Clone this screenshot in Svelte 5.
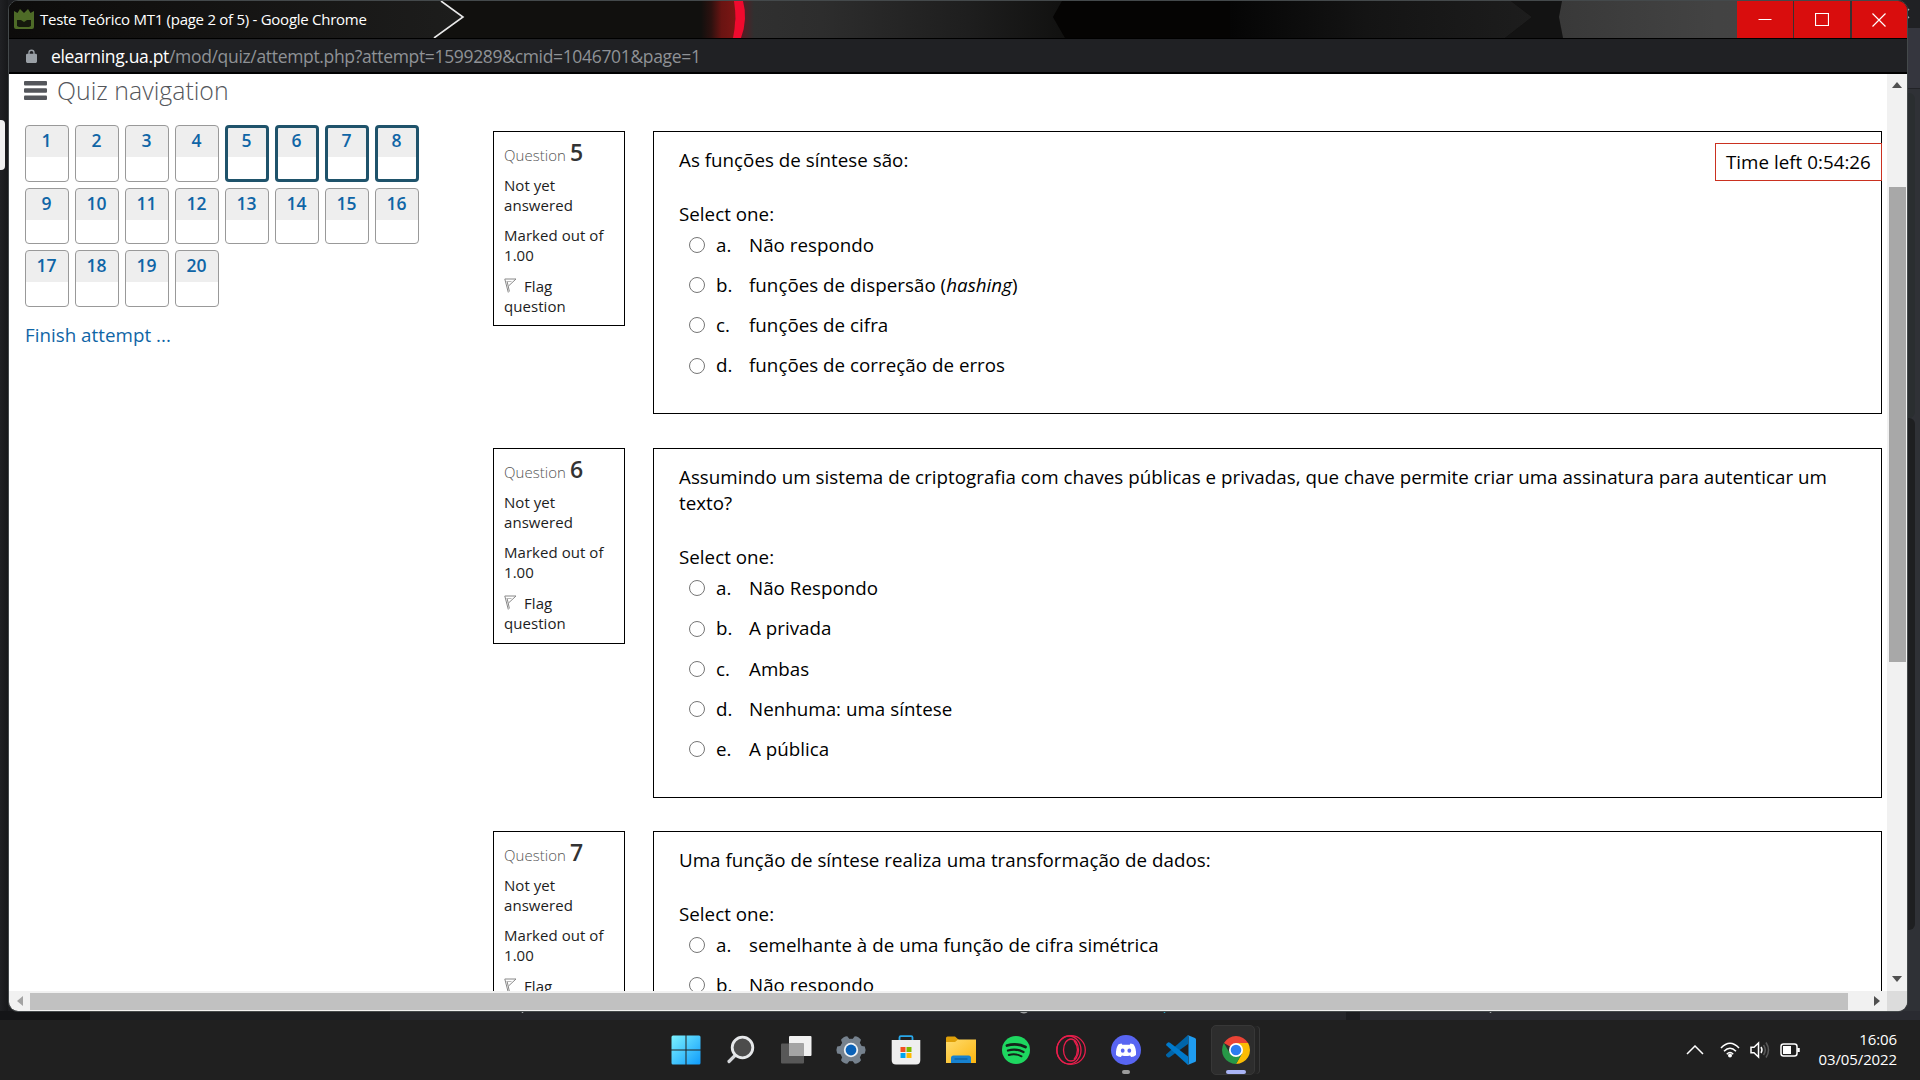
<script>
  const pages = Array.from({ length: 20 }, (_, i) => i + 1);
  const isCurrent = (n) => n >= 5 && n <= 8;

  const questions = [
    {
      number: 5,
      text: 'As funções de síntese são:',
      size: 'short',
      options: [
        { text: 'Não respondo' },
        { text: 'funções de dispersão (', em: 'hashing', after: ')' },
        { text: 'funções de cifra' },
        { text: 'funções de correção de erros' }
      ]
    },
    {
      number: 6,
      text: 'Assumindo um sistema de criptografia com chaves públicas e privadas, que chave permite criar uma assinatura para autenticar um texto?',
      size: 'tall',
      options: [
        { text: 'Não Respondo' },
        { text: 'A privada' },
        { text: 'Ambas' },
        { text: 'Nenhuma: uma síntese' },
        { text: 'A pública' }
      ]
    },
    {
      number: 7,
      text: 'Uma função de síntese realiza uma transformação de dados:',
      size: 'short',
      options: [
        { text: 'semelhante à de uma função de cifra simétrica' },
        { text: 'Não respondo' }
      ]
    }
  ];
</script>

<div class="desktop">
  <div class="behind-left"></div>
  <div class="edge-tab"></div>
  <div class="behind-right"><i class="r1"></i><i class="r2"></i><i class="r3"></i><i class="r4"></i></div>
  <div class="behind-bottom"><i class="b1"></i><i class="b2"></i><i class="b3"></i><i class="b4"></i><i class="b5"></i></div>
  <svg class="specks" width="1920" height="1080" viewBox="0 0 1920 1080"><g fill="none" stroke="#a0a2a4" stroke-width="1.500"><path d="M522.500 1011V1013M1490.500 1011V1013M1019.500 1011Q1024 1014.500 1028 1011" /><path d="M1164.500 1011V1013" stroke="#2b9bb5" /><path d="M1906 12L1909 9M1906 15L1909 18" /></g></svg>

  <div class="window">
    <header class="titlebar">
      <svg class="theme" width="1898" height="37" viewBox="9 1 1898 37" preserveAspectRatio="none">
        <defs>
          <linearGradient id="tabg" x1="0" x2="1"><stop offset="0" stop-color="#0d0c0b" /><stop offset=".25" stop-color="#11100f" /><stop offset="1" stop-color="#1d1d1c" /></linearGradient>
          <linearGradient id="redg" x1="0" x2="1"><stop offset="0" stop-color="#11100e" /><stop offset=".3" stop-color="#2c110f" /><stop offset=".6" stop-color="#691412" /><stop offset="1" stop-color="#7b1614" /></linearGradient>
          <linearGradient id="greyg" x1="0" x2="1"><stop offset="0" stop-color="#5a1a22" /><stop offset=".04" stop-color="#303030" /><stop offset=".25" stop-color="#2d2d2d" /><stop offset=".7" stop-color="#1e1e1e" /><stop offset="1" stop-color="#111110" /></linearGradient>
          <linearGradient id="darkg" x1="0" x2="1"><stop offset="0" stop-color="#050505" /><stop offset=".45" stop-color="#141414" /><stop offset="1" stop-color="#1d1d1d" /></linearGradient>
          <linearGradient id="lightg" x1="0" x2="1"><stop offset="0" stop-color="#393939" /><stop offset=".45" stop-color="#434343" /><stop offset="1" stop-color="#444" /></linearGradient>
        </defs>
        <rect x="9" y="1" width="1898" height="37" fill="#11100e" />
        <path d="M9 1H441L463 17L434 38H9Z" fill="url(#tabg)" />
        <path d="M441 1L463 17L434 38" fill="none" stroke="#e8e8e8" stroke-width="1.6" />
        <rect x="701" y="1" width="34" height="37" fill="url(#redg)" />
        <path d="M743 1H1062L1053 17L1065 38H741Z" fill="url(#greyg)" />
        <path d="M734 1H743Q748 19 741 38H733Q737 19 734 1Z" fill="#f00a2e" />
        <path d="M1062 1H1300V38H1065L1053 17Z" fill="#050403" />
        <path d="M1230 1H1511L1532 17L1505 38H1230Z" fill="url(#darkg)" />
        <path d="M1511 1H1562L1559 17L1563 38H1505L1532 17Z" fill="#131313" />
        <path d="M1562 1H1907V38H1563L1559 17Z" fill="url(#lightg)" />
      </svg>
      <svg class="favicon" width="20" height="20" viewBox="0 0 20 20"><path d="M0 2L3.500 4L6 0L10 4L14 0L16.500 4L20 2V18Q20 20 18 20H2Q0 20 0 18Z" fill="#4e6b27" /><path d="M3 11H7L10 13L13 11H17V17L15 18H5L3 17Z" fill="#15190d" /></svg>
      <span class="title">Teste Teórico MT1 (page 2 of 5) - Google Chrome</span>
      <div class="controls">
        <div><svg width="14" height="14" viewBox="0 0 14 14"><path d="M.5 6.500H13.500" /></svg></div>
        <div><svg width="14" height="14" viewBox="0 0 14 14"><path d="M.5.5H13.500V12.500H.5Z" /></svg></div>
        <div><svg width="14" height="14" viewBox="0 0 14 14"><path d="M.5.5L13.500 13.500M13.500.5L.5 13.500" /></svg></div>
      </div>
    </header>

    <div class="address">
      <svg width="11" height="14" viewBox="0 0 12 15"><path d="M1.500 5H2.500V4A3.500 3.500 0 0 1 9.500 4V5H10.500Q12 5 12 6.500V13.500Q12 15 10.500 15H1.500Q0 15 0 13.500V6.500Q0 5 1.500 5ZM4 5H8V4A2 2 0 0 0 4 4Z" fill="#9aa0a6" fill-rule="evenodd" /></svg>
      <span class="url"><b>elearning.ua.pt</b>/mod/quiz/attempt.php?attempt=1599289&amp;cmid=1046701&amp;page=1</span>
    </div>

    <div class="viewport">
      <main class="page">
        <aside class="nav">
          <h2><svg width="23" height="19" viewBox="0 0 23 19"><rect width="23" height="4.500" rx="1" /><rect y="7.200" width="23" height="4.500" rx="1" /><rect y="14.400" width="23" height="4.500" rx="1" /></svg><span>Quiz navigation</span></h2>
          <div class="grid">
            {#each pages as n}
              <a class:current={isCurrent(n)}><span>{n}</span></a>
            {/each}
          </div>
          <a class="finish">Finish attempt ...</a>
        </aside>

        <section class="questions">
          {#each questions as q}
            <article class={q.size}>
              <div class="info">
                <h3>Question <b>{q.number}</b></h3>
                <p>Not yet<br />answered</p>
                <p>Marked out of<br />1.00</p>
                <p class="flag"><svg width="13" height="15" viewBox="0 0 13 15"><path d="M.8 1L4.300 14.500M3 3L5.400 13.500M.8 1H12L4.500 8" /><path d="M4 3.500H7.500" stroke-width=".6" /></svg>Flag<br />question</p>
              </div>
              <div class="content">
                <p class="qtext">{q.text}</p>
                <p class="prompt">Select one:</p>
                {#each q.options as o, i}
                  <label><i class="radio"></i><span class="letter">{'abcde'[i]}.</span><span>{o.text}{#if o.em}<em>{o.em}</em>{o.after}{/if}</span></label>
                {/each}
              </div>
            </article>
          {/each}
        </section>
        <div class="timer">Time left 0:54:26</div>
      </main>
      <div class="vbar">
        <svg width="10" height="6" viewBox="0 0 10 6"><path d="M0 6L5 0L10 6Z" fill="#505050" /></svg>
        <i></i>
        <svg class="down" width="10" height="6" viewBox="0 0 10 6"><path d="M0 0L5 6L10 0Z" fill="#505050" /></svg>
      </div>
    </div>
    <div class="hbar">
      <svg width="6" height="10" viewBox="0 0 6 10"><path d="M6 0L0 5L6 10Z" fill="#a3a3a3" /></svg>
      <i></i>
      <svg class="right" width="6" height="10" viewBox="0 0 6 10"><path d="M0 0L6 5L0 10Z" fill="#505050" /></svg>
      <b></b>
    </div>
  </div>

  <footer class="taskbar">
    <div class="apps">
      <div class="app">
        <svg width="30" height="30" viewBox="0 0 30 30"><defs><linearGradient id="win" x1="0" y1="0" x2="1" y2="1"><stop offset="0" stop-color="#7cf2ff" /><stop offset="1" stop-color="#0f9bfb" /></linearGradient></defs><path d="M.5 2Q.5.500 2 .5H14.500V14.500H.5ZM15.500.5H28Q29.500.500 29.500 2V14.500H15.500ZM.5 15.500H14.500V29.500H2Q.5 29.500.5 28ZM15.500 15.500H29.500V28Q29.500 29.500 28 29.500H15.500Z" fill="url(#win)" /></svg>
      </div>
      <div class="app">
        <svg width="30" height="30" viewBox="0 0 30 30"><path d="M9.500 20L3 26.500" stroke="#d4d6d9" stroke-width="3.200" stroke-linecap="round" /><circle cx="16.500" cy="12.500" r="10.300" fill="#4c4c4c" stroke="#e6e8ea" stroke-width="2.800" /></svg>
      </div>
      <div class="app">
        <svg width="32" height="30" viewBox="0 0 32 30"><rect x="9" y="1" width="22.500" height="20" rx="1" fill="#f1f1f1" /><rect x="1" y="8.500" width="23" height="20" rx="1" fill="#585858" /><path d="M9 8.500H24V21H9Z" fill="#a5a5a5" /></svg>
      </div>
      <div class="app">
        <svg width="32" height="30" viewBox="-16 -15 32 30"><g fill="#76828e"><circle r="11.300" />{#each [30, 90, 150, 210, 270, 330] as a}<path d="M-4.500 -8L-3.600 -13.800Q0 -15.500 3.600 -13.800L4.500 -8Z" transform="rotate({a})" />{/each}</g><circle r="7.200" fill="#eef2f5" /><circle r="5.400" fill="#0a62b8" /></svg>
      </div>
      <div class="app">
        <svg width="30" height="30" viewBox="0 0 30 30"><path d="M8.500 6V2.500Q8.500 1.200 9.800 1.200H20.200Q21.500 1.200 21.500 2.500V6" fill="none" stroke="#29a8ea" stroke-width="1.800" /><path d="M.7 5H29.300V25Q29.300 29.500 25 29.500H5Q.7 29.500.7 25Z" fill="#efefef" /><path d="M9.500 12H14.500V17H9.500Z" fill="#f25022" /><path d="M15.500 12H20.500V17H15.500Z" fill="#7fba00" /><path d="M9.500 18H14.500V23H9.500Z" fill="#00a4ef" /><path d="M15.500 18H20.500V23H15.500Z" fill="#ffb900" /></svg>
      </div>
      <div class="app">
        <svg width="32" height="30" viewBox="0 0 32 30"><defs><linearGradient id="fold" x1="0" y1="0" x2="1" y2="1"><stop offset="0" stop-color="#ffdc6e" /><stop offset="1" stop-color="#fbb50f" /></linearGradient></defs><path d="M1 3Q1 1.500 2.500 1.500H10L14 5H20V10H1Z" fill="#dfa009" /><path d="M1 7H10L13 4.500H31V28H1Z" fill="url(#fold)" /><path d="M6 28V23Q6 20.500 8.500 20.500H23.500Q26 20.500 26 23V28Z" fill="#1782d0" /><path d="M9.500 24H22.500" stroke="#0b5590" /></svg>
      </div>
      <div class="app">
        <svg width="30" height="30" viewBox="0 0 30 30"><circle cx="15" cy="15" r="14" fill="#1ed760" /><g fill="none" stroke="#14231a" stroke-linecap="round"><path d="M6 10.500Q15.500 7.500 24.500 12" stroke-width="2.800" /><path d="M7 15.500Q15 13 22.500 17" stroke-width="2.300" /><path d="M7.800 20Q14.500 18 20.500 21.300" stroke-width="1.900" /></g></svg>
      </div>
      <div class="app">
        <svg width="32" height="32" viewBox="0 0 32 32"><g fill="none" stroke="#e91e4c" stroke-width="1.300"><circle cx="16" cy="16" r="14.300" /><ellipse cx="16" cy="16" rx="7.500" ry="11" /><ellipse cx="14" cy="16" rx="12" ry="14" /><path d="M19 6.500Q26 16 19 25.500" /></g></svg>
      </div>
      <div class="app">
        <svg width="30" height="30" viewBox="0 0 30 30"><circle cx="15" cy="15" r="15" fill="#5865f2" /><path d="M10.500 8.500Q8 9 7.300 9.500Q4.500 14 5 20Q7 22 9.800 22L11 20.500Q15 21.500 19 20.500L20.200 22Q23 22 25 20Q25.500 14 22.700 9.500Q22 9 19.500 8.500L18.700 9.700H11.300Z" fill="#fff" /><ellipse cx="11.700" cy="15.700" rx="1.900" ry="2.100" fill="#5865f2" /><ellipse cx="18.300" cy="15.700" rx="1.900" ry="2.100" fill="#5865f2" /></svg>
        <i class="running"></i>
      </div>
      <div class="app">
        <svg width="30" height="30" viewBox="0 0 30 30"><path d="M22 0L0 19.500Q-.2 20.500.5 21.300L2 22.500Q3 22.700 4 22L22 9Z" fill="#0065a9" /><path d="M22 30L.5 10.500Q-.2 9.500.5 8.700L2 7.400Q3 7 4 7.700L22 21.500Z" fill="#007acc" /><path d="M21.500 0L29 3Q30 3.500 30 4.500V25.500Q30 26.500 29 27L21.500 30Q22.500 29.500 22.500 28V2Q22.500.500 21.500 0Z" fill="#1f9cf0" /></svg>
      </div>
      <div class="app active">
        <svg width="28" height="28" viewBox="-14 -14 28 28"><path d="M0 0L-12.100 -7A14 14 0 0 1 12.100 -7Z" fill="#ea4335" /><path d="M0 -7H12.120A14 14 0 0 1 0 14L6 3.500Z" fill="#fbbc04" /><path d="M0 14A14 14 0 0 1 -12.120 -7L-6 3.500L0 7L6 3.500Z" fill="#279847" /><circle r="7" fill="#fff" /><circle r="5.300" fill="#2c7cf0" /></svg>
        <i class="running"></i>
      </div>
    </div>
    <div class="tray">
      <svg width="18" height="10" viewBox="0 0 18 10"><path d="M1 9L9 1L17 9" /></svg>
      <svg class="wifi" width="20" height="16" viewBox="0 0 20 16"><path d="M1 6Q10 -3.500 19 6M4 9.300Q10 3 16 9.300M6.800 12.200Q10 8.800 13.200 12.200" /><circle cx="10" cy="13.500" r="2" fill="#fff" stroke="none" /></svg>
      <svg class="sound" width="20" height="18" viewBox="0 0 20 18"><path d="M1 6.200H4L8.500 2V16L4 11.800H1Z" /><path d="M11 6Q13 9 11 12" /><path d="M13.500 4Q17 9 13.500 14M16 1.500Q21 9 16 16.500" stroke="#5a5a5a" /></svg>
      <svg class="battery" width="21" height="14" viewBox="0 0 21 14"><rect x="1" y="1" width="16" height="12" rx="2.500" /><path d="M3 3H11V11H3Z" fill="#fff" stroke="none" /><path d="M18.500 5V9" stroke-width="2.500" /></svg>
      <div class="clock"><span>16:06</span><span>03/05/2022</span></div>
    </div>
  </footer>
</div>

<style>
  :global(body) { margin: 0; overflow: hidden; }
  .desktop { position: relative; box-sizing: border-box; width: 1920px; height: 1080px; overflow: hidden; background: #1c1d20; padding-left: 8px; font-family: 'Open Sans', sans-serif; }
  .desktop * { box-sizing: border-box; }
  .edge-tab { position: absolute; left: 0; top: 120px; width: 5px; height: 50px; background: #f0f0f0; border-radius: 0 4px 4px 0; }
  .behind-left { position: absolute; left: 0; top: 0; width: 8px; height: 1012px; background: linear-gradient(90deg, #202124, #17181a); }
  .behind-right { position: absolute; left: 1900px; top: 0; width: 20px; height: 1020px; display: flex; flex-direction: column; background: #2f3136; }
  .r1 { height: 28px; background: #202124; }
  .r2 { height: 61px; background: #35363e; border-bottom: 1px solid #222327; }
  .r3 { width: 15px; height: 325px; margin-top: 4px; border-radius: 0 6px 6px 0; background: #2a2e30; }
  .r4 { width: 15px; height: 512px; border-radius: 0 6px 6px 0; background: #1e1f21; }
  .behind-bottom { position: absolute; left: 0; top: 1011px; width: 1920px; height: 9px; display: flex; background: #26272c; }
  .b1 { width: 90px; background: #141517; }
  .b2 { width: 300px; background: #1c1e22; }
  .b3 { width: 956px; background: #25262b; }
  .b4 { width: 14px; background: #1b1c20; }
  .b5 { flex: 1; background: #2a2b31; }
  .specks { position: absolute; left: 0; top: 0; }

  .window { position: relative; width: 1900px; height: 1012px; border: 1px solid #44494b; border-radius: 10px; overflow: hidden; background: #000; display: flex; flex-direction: column; }
  .titlebar { position: relative; height: 37px; flex: none; display: flex; align-items: center; padding-left: 5px; }
  .theme { position: absolute; left: 0; top: 0; }
  .favicon { position: relative; margin-top: -1px; }
  .title { position: relative; flex: 1; margin: 0 0 1px 6px; color: #fff; font: 400 15px/20px 'Open Sans', sans-serif; letter-spacing: -0.27px; white-space: pre; }
  .controls { position: relative; display: flex; height: 37px; gap: 1px; background: #3a3030; }
  .controls div { width: 56px; background: #d90d0d; display: flex; align-items: center; justify-content: center; }
  .controls div:last-child { width: 55px; margin-left: 1px; padding-right: 2px; }
  .controls svg { fill: none; stroke: #fff; stroke-width: 1.2; }
  .address { height: 33px; flex: none; margin: 1px 0 2px; background: #202124; display: flex; align-items: center; padding: 0 0 0 17px; gap: 14px; }
  .url { color: #8f9296; font-size: 17.5px; line-height: 24px; letter-spacing: -0.33px; white-space: pre; }
  .url b { font-weight: 400; color: #fff; }

  .viewport { height: 917px; flex: none; display: flex; background: #fff; }
  .page { position: relative; flex: 1; height: 917px; overflow: hidden; display: flex; color: #000; font-size: 18.75px; line-height: 26.25px; letter-spacing: 0.025px; }
  .nav { width: 484px; padding: 0 0 0 16px; }
  h2 { display: flex; align-items: center; gap: 10px; height: 34px; margin: 0 0 0 -1px; padding-bottom: 1px; font-size: 24.85px; font-weight: 300; color: #54565b; }
  h2 svg { fill: #54565b; }
  .grid { display: grid; grid-template-columns: repeat(8, 44px); grid-auto-rows: 56.500px; gap: 6px; margin-top: 17px; }
  .grid a { border: 1px solid #999; border-radius: 4px; background: linear-gradient(#eee 31px, #fff 31px); text-align: center; color: #0f65a6; font-size: 17.5px; font-weight: 600; line-height: 29px; overflow: hidden; letter-spacing: 0; padding-right: 1px; }
  .grid a.current { border: 3px solid #1f536b; line-height: 25px; background: linear-gradient(#eee 29px, #fff 29px); }
  .finish { display: block; margin-top: 15px; color: #0f65a6; }
  .questions { width: 1389px; padding-top: 57px; }
  article { display: flex; gap: 28px; align-items: flex-start; margin-bottom: 34px; }
  .short { height: 283px; }
  .tall { height: 350px; margin-bottom: 33px; }
  .info { width: 132px; height: 195px; border: 1px solid #000; padding: 8px 0 0 10px; font-size: 15px; line-height: 20px; color: #1d1d1d; letter-spacing: 0.05px; }
  .tall .info { height: 196px; }
  .info h3 { margin: 0 0 11px; height: 24px; font-size: 15px; font-weight: 300; line-height: 24px; color: #555; white-space: nowrap; }
  .info h3 b { font-size: 23px; font-weight: 600; line-height: 24px; color: #333; }
  .info p { margin: 0 0 10px; white-space: nowrap; }
  .info .flag { padding-top: 1px; }
  .flag svg { margin: 0 7px -1px 0; fill: none; stroke: #888; stroke-width: 1; }
  .content { width: 1229px; height: 100%; border: 1px solid #000; padding: 15px 25px; }
  .qtext { margin: 0 0 27.600px; }
  .prompt { margin: 0 0 4.900px; }
  label { display: flex; align-items: center; height: 26.250px; margin-bottom: 13.900px; }
  .radio { width: 16px; height: 16px; border: 1.25px solid #767676; border-radius: 50%; margin: 0 11px 0 10px; }
  .letter { width: 33px; }
  .timer { position: absolute; left: 1706px; top: 69px; width: 167px; height: 38px; border: 1px solid #ca3120; background: #fff; padding-left: 10px; line-height: 36px; white-space: nowrap; }

  .vbar { width: 20px; background: #f1f1f1; display: flex; flex-direction: column; align-items: center; padding: 8px 0 9px; }
  .vbar i { width: 17px; height: 475px; margin-top: 99px; background: #a8a8a8; }
  .vbar .down { margin-top: auto; }
  .hbar { height: 20px; background: #f1f1f1; display: flex; align-items: center; padding-left: 8px; }
  .hbar i { width: 1818px; height: 17px; margin-left: 7px; background: #c1c1c1; }
  .right { margin-left: 26px; }
  .hbar b { margin-left: auto; width: 20px; height: 20px; background: #dcdcdc; }

  .taskbar { position: relative; height: 60px; margin: 8px 0 0 -8px; background: #202020; display: flex; justify-content: space-between; }
  .apps { display: flex; margin-left: 662px; gap: 7px; padding-top: 5px; }
  .app { position: relative; width: 48px; height: 50px; display: flex; align-items: center; justify-content: center; }
  .active { width: 44px; margin-left: -1px; padding-left: 6px; border-radius: 5px; border: 1px solid #373737; background: #2d2d2d; box-shadow: 5px 0 0 -1px #242424, 6px 0 0 -1px #383838; }
  .running { position: absolute; left: 20px; bottom: 1px; width: 8px; height: 4px; border-radius: 2px; background: #9b9b9b; }
  .active .running { left: 14px; bottom: 0; width: 20px; background: #a9b4f5; }
  .tray { display: flex; align-items: center; padding-right: 23px; color: #fff; }
  .tray svg { fill: none; stroke: #fff; stroke-width: 1.500; }
  .wifi { margin-left: 16px; }
  .sound { margin-left: 10px; }
  .battery { margin-left: 10px; }
  .clock { width: 96px; padding-bottom: 3px; display: flex; flex-direction: column; align-items: flex-end; font-size: 15px; line-height: 20px; letter-spacing: -0.12px; }
</style>
